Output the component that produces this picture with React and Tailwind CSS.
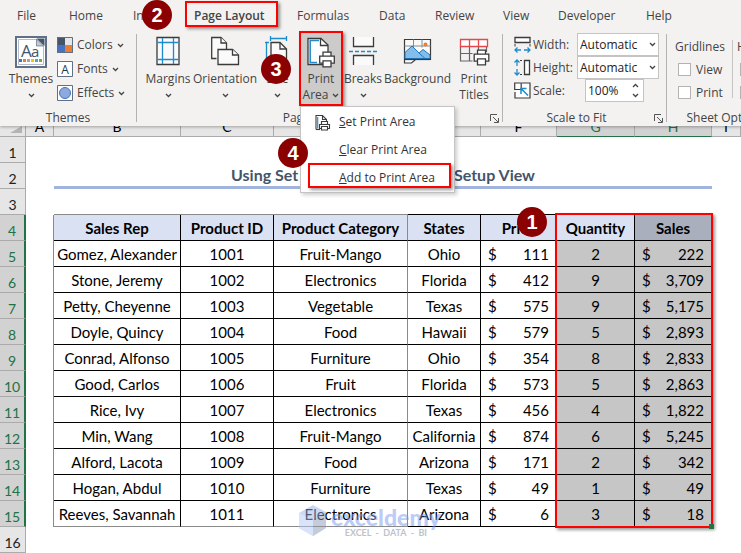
import { useState } from "react";

const TABS = [
  { name: "File", width: "w-[52px]" },
  { name: "Home", width: "w-[64px]" },
  { name: "Insert", width: "w-[61px]" },
  { name: "Page Layout", width: "w-[103px]" },
  { name: "Formulas", width: "w-[82px]" },
  { name: "Data", width: "w-[56px]" },
  { name: "Review", width: "w-[68px]" },
  { name: "View", width: "w-[55px]" },
  { name: "Developer", width: "w-[88px]" },
  { name: "Help", width: "w-[40px]" },
];

const HEADERS = ["Sales Rep", "Product ID", "Product Category", "States", "Price", "Quantity", "Sales"];

const ROWS = [
  ["Gomez, Alexander", "1001", "Fruit-Mango", "Ohio", "111", "2", "222"],
  ["Stone, Jeremy", "1002", "Electronics", "Florida", "412", "9", "3,709"],
  ["Petty, Cheyenne", "1003", "Vegetable", "Texas", "575", "9", "5,175"],
  ["Doyle, Quincy", "1004", "Food", "Hawaii", "579", "5", "2,893"],
  ["Conrad, Alfonso", "1005", "Furniture", "Ohio", "354", "8", "2,833"],
  ["Good, Carlos", "1006", "Fruit", "Florida", "573", "5", "2,863"],
  ["Rice, Ivy", "1007", "Electronics", "Texas", "456", "4", "1,822"],
  ["Min, Wang", "1008", "Fruit-Mango", "California", "874", "6", "5,245"],
  ["Alford, Lacota", "1009", "Food", "Arizona", "171", "2", "342"],
  ["Hogan, Abdul", "1010", "Furniture", "Texas", "49", "1", "49"],
  ["Reeves, Savannah", "1011", "Electronics", "Arizona", "6", "3", "18"],
];

function Chevron({ up = false }) {
  return (
    <svg width="7" height="5" viewBox="0 0 7 5" fill="none" stroke="#444" strokeWidth="1.3" className="shrink-0">
      <path d={up ? "M1 4l2.5-2.5L6 4" : "M1 1l2.5 2.5L6 1"} />
    </svg>
  );
}

function Callout({ n, className }) {
  return (
    <span
      className={`pointer-events-none absolute z-40 flex size-[30px] items-center justify-center rounded-full bg-[#8b0000] font-['Liberation_Sans',sans-serif] text-[20px] leading-none font-bold text-white ${className}`}
    >
      {n}
    </span>
  );
}

function RedBox({ className }) {
  return (
    <span
      className={`pointer-events-none absolute border-2 border-[#ff0000] shadow-[2px_2px_3px_rgba(0,0,0,0.4)] ${className}`}
    />
  );
}

function Printer({ x, y }) {
  return (
    <g transform={`translate(${x} ${y})`} fill="#fff" stroke="#3b3b3b" strokeWidth="1.3">
      <path d="M4 5V.7h8V5" />
      <path d="M.7 4.7h14.6v7H.7z" />
      <path d="M4 9.3h8v6H4z" />
    </g>
  );
}

function ThemesIcon() {
  return (
    <svg width="32" height="32" viewBox="0 0 32 32">
      <rect x="1" y="1" width="30" height="30" fill="#fff" stroke="#5f6f85" strokeWidth="2" />
      <path d="M3.5 28.5v-25H22l6.5 6.5v18.5z" fill="#fff" stroke="#b4bccb" />
      <path d="M21.5 2.5H29.5V10z" fill="#44546a" />
      <path d="M21.5 3v7H28.5z" fill="#c3cad6" stroke="#5f6f85" strokeWidth=".7" />
      <text x="6" y="21" fontSize="17" fill="#44546a" fontFamily="Open Sans, sans-serif">A</text>
      <text x="16" y="21" fontSize="15" fill="#44546a" fontFamily="Open Sans, sans-serif">a</text>
      <path d="M4 23h3v3H4z" fill="#4472c4" />
      <path d="M8 23h3v3H8z" fill="#ed7d31" />
      <path d="M12 23h3v3h-3z" fill="#a5a5a5" />
      <path d="M16 23h3v3h-3z" fill="#ffc000" />
      <path d="M20 23h3v3h-3z" fill="#5b9bd5" />
      <path d="M24 23h3v3h-3z" fill="#70ad47" />
    </svg>
  );
}

function ColorsIcon() {
  return (
    <svg width="16" height="16" viewBox="0 0 16 16">
      <path d="M0 0h8v8H0z" fill="#44546a" />
      <path d="M8 0h8v8H8z" fill="#e7e6e6" />
      <path d="M0 8h8v8H0z" fill="#4472c4" />
      <path d="M8 8h8v8H8z" fill="#ed7d31" />
      <path d="M.5.5h15v15H.5z" fill="none" stroke="#5f6f85" />
    </svg>
  );
}

function FontsIcon() {
  return (
    <svg width="16" height="16" viewBox="0 0 16 16">
      <path d="M.5.5h15v15H.5z" fill="#fff" stroke="#5f6f85" />
      <text x="8" y="12.5" textAnchor="middle" fontSize="12" fill="#26374d" fontFamily="Open Sans, sans-serif">A</text>
    </svg>
  );
}

function EffectsIcon() {
  return (
    <svg width="16" height="16" viewBox="0 0 16 16">
      <path d="M.5.5h15v15H.5z" fill="#fff" stroke="#5f6f85" />
      <circle cx="8" cy="8" r="5.5" fill="#8ea9db" stroke="#4472c4" />
    </svg>
  );
}

function MarginsIcon() {
  return (
    <svg width="24" height="30" viewBox="0 0 24 30" fill="none">
      <path d="M1 1.500h22v27H1z" fill="#fafafa" stroke="#3b3b3b" strokeWidth="1.3" />
      <path d="M6.5 2v26M17.5 2v26M1.500 6.5h21M1.500 23.5h21" stroke="#1e8bcd" strokeWidth="1.3" />
    </svg>
  );
}

function OrientationIcon() {
  return (
    <svg width="30" height="30" viewBox="0 0 30 30" fill="#fafafa" stroke="#3b3b3b" strokeWidth="1.3">
      <path d="M6.500 22.5H1.700V1.500H11l5.500 5.500v6" />
      <path d="M11 1.500V7h5.500" />
      <path d="M8 13.500h14.500l6 5.500v9.500H8z" />
      <path d="M22.500 13.500V19h6" />
    </svg>
  );
}

function SizeIcon() {
  return (
    <svg width="26" height="30" viewBox="0 0 26 30" fill="none">
      <path d="M5.5 2.5h16M5.5 0v5M21.5 0v5M1.5 6v22M0 6.5h4" stroke="#1e8bcd" strokeWidth="1.3" />
      <path d="M6 28.5V6.5h9l6.5 6.5v15.5z" fill="#fafafa" stroke="#3b3b3b" strokeWidth="1.3" />
      <path d="M15 6.5V13h6.5" stroke="#3b3b3b" strokeWidth="1.3" />
    </svg>
  );
}

function PrintAreaIcon({ width = 28, height = 32 }) {
  return (
    <svg width={width} height={height} viewBox="0 0 28 32">
      <path d="M1 28.5V2.5h13l7 6.5v19.5z" fill="#fff" stroke="#3b3b3b" strokeWidth="1.3" />
      <path d="M10 26.5H3.2V4.5H12" fill="none" stroke="#1e8bcd" strokeWidth="1.5" />
      <path d="M13.5 2.5V9.5H21" fill="none" stroke="#3b3b3b" strokeWidth="1.3" />
      <Printer x={12} y={15.5} />
    </svg>
  );
}

function SetPrintAreaIcon() {
  return (
    <svg width="16" height="17" viewBox="0 0 16 17" fill="none" stroke="#3b3b3b" strokeWidth="1.1">
      <path d="M1 15.5V1.500h6.500l4 4v3M7.500 1.500v4h4" />
      <path d="M2.700 14.500V3" stroke="#1e8bcd" />
      <path d="M6.500 10.500v-3h6v3M4.500 10.500h10v4h-10z" fill="#fff" />
      <path d="M6.500 12.500h6v3.500h-6z" fill="#fff" />
      <path d="M1 15.500h4" />
    </svg>
  );
}

function BreaksIcon() {
  return (
    <svg width="30" height="30" viewBox="0 0 30 30" fill="none">
      <path d="M5.5 1v9.5h20V1M5.5 29v-9.5h20V29" fill="#fafafa" stroke="#3b3b3b" strokeWidth="1.3" />
      <path d="M1 15.5h29" stroke="#1e8bcd" strokeWidth="1.3" strokeDasharray="4 2" />
    </svg>
  );
}

function BackgroundIcon() {
  return (
    <svg width="30" height="30" viewBox="0 0 30 30" fill="none">
      <path d="M1.5 3.5h26v20h-15l-4 3.5h-7z" fill="#fafafa" stroke="#3b3b3b" strokeWidth="1.2" />
      <path d="M10.5 3.5v8M19 3.5v8M1.5 10h26" stroke="#8a8a8a" />
      <path d="M2 22.5v-6l7-6.5 7 7 4-3.5 7 5.5v3.5z" fill="#83bdec" stroke="#1e77bd" />
      <path d="M16 17l6 5.5" stroke="#1e77bd" />
      <circle cx="22.5" cy="8.5" r="2" fill="#ed7d31" />
      <path d="M1.5 23.5h26" stroke="#3b3b3b" strokeWidth="1.2" />
    </svg>
  );
}

function PrintTitlesIcon() {
  return (
    <svg width="32" height="30" viewBox="0 0 32 30" fill="none">
      <path d="M2.5 10v15h12M11.5 10v15M2.5 17.5h12M20.5 10v5M28.5 10v6" stroke="#666" strokeWidth="1.2" />
      <path d="M2.5 3.5h27v7h-27zM11.5 3.5v7M20.5 3.5v7" fill="#fff" stroke="#e8474c" strokeWidth="1.3" />
      <Printer x={15.5} y={13.5} />
    </svg>
  );
}

function WidthIcon() {
  return (
    <svg width="17" height="17" viewBox="0 0 17 17" fill="none">
      <path d="M1 1.5h15v5H1z" fill="#fff" stroke="#3b3b3b" strokeWidth="1.3" />
      <path d="M1 8v2.5M16 8v2.5" stroke="#3b3b3b" />
      <path d="M1 14h6M10 14h6M3.5 11.500L1 14l2.500 2.500M13.500 11.500L16 14l-2.500 2.500" stroke="#1e8bcd" strokeWidth="1.3" />
    </svg>
  );
}

function HeightIcon() {
  return (
    <svg width="17" height="17" viewBox="0 0 17 17" fill="none">
      <path d="M10.5 1.5h5v14h-5z" fill="#fff" stroke="#3b3b3b" strokeWidth="1.3" />
      <path d="M6 1.5h3M6 15.5h3" stroke="#3b3b3b" strokeDasharray="2 1" />
      <path d="M3 1v6M3 10v6M.5 3.5L3 1l2.5 2.5M.5 13.5L3 16l2.5-2.5" stroke="#1e8bcd" strokeWidth="1.3" />
    </svg>
  );
}

function ScaleIcon() {
  return (
    <svg width="17" height="17" viewBox="0 0 17 17" fill="none">
      <path d="M8 1H16v15H1v-6" fill="#fff" stroke="#3b3b3b" strokeWidth="1.2" />
      <path d="M.7 1h6.500v6.500H.7z" fill="#fff" stroke="#3b3b3b" strokeWidth="1.2" />
      <path d="M14 13.500L7.500 7M7 12V6.500h5.500" stroke="#1e8bcd" strokeWidth="1.5" />
    </svg>
  );
}

function Launcher({ label }) {
  return (
    <button aria-label={label} className="absolute right-[3px] bottom-[3px]">
      <svg width="9" height="9" viewBox="0 0 9 9" fill="none" stroke="#555">
        <path d="M.5 7V.5H7M3 3l5 5M8.5 4v4.5H4" />
      </svg>
    </button>
  );
}

function Group({ title, className, children, launcher }) {
  return (
    <section className={`relative flex shrink-0 flex-col ${className}`}>
      <div className="flex h-[79px]">{children}</div>
      <div className={`text-center leading-4 ${launcher ? "pr-4" : ""}`}>{title}</div>
      {launcher && <Launcher label={`${title} settings`} />}
    </section>
  );
}

function Divider() {
  return <div className="mt-[3px] h-[88px] w-px shrink-0 bg-[#b5b3b1]" />;
}

function BigButton({ icon, label, second, menu = false, className }) {
  return (
    <button className={`flex shrink-0 flex-col items-center pt-[5px] leading-4 ${className}`}>
      <span className="flex h-[35px] items-start">{icon}</span>
      <span>{label}</span>
      <span className="flex h-4 items-center gap-1">
        {second}
        {menu && <Chevron />}
      </span>
    </button>
  );
}

function SmallButton({ icon, label }) {
  return (
    <button className="flex h-6 items-center gap-1">
      {icon}
      <span>{label}</span>
      <Chevron />
    </button>
  );
}

function FitSelect({ id, icon, label }) {
  return (
    <div className="flex h-[23px] items-center">
      {icon}
      <label htmlFor={id} className="w-[46px] pl-0.5">{label}</label>
      <span className="relative flex items-center">
        <select id={id} className="h-[23px] w-[82px] appearance-none border border-[#c6c4c2] bg-white pl-0.5 text-[#222]">
          <option>Automatic</option>
        </select>
        <span className="pointer-events-none absolute right-[3px]"><Chevron /></span>
      </span>
    </div>
  );
}

function CheckOption({ label }) {
  return (
    <label className="flex h-[23px] items-center gap-[5px]">
      <input type="checkbox" className="size-[13px] shrink-0 appearance-none border border-[#b5b3b1] bg-white" />
      {label}
    </label>
  );
}

function PrintAreaMenu() {
  const item = "flex h-7 w-full items-center text-left";
  return (
    <div role="menu" className="absolute top-[75px] left-px z-30 w-[155px] border border-[#c6c4c2] bg-white pt-px text-[#333] shadow-[2px_2px_4px_rgba(0,0,0,0.2)]">
      <button role="menuitem" className={item}>
        <span className="w-[38px] pl-[14px]"><SetPrintAreaIcon /></span>
        <span><u>S</u>et Print Area</span>
      </button>
      <button role="menuitem" className={`${item} pl-[38px]`}>
        <span><u>C</u>lear Print Area</span>
      </button>
      <button role="menuitem" className={`${item} relative pl-[38px]`}>
        <span><u>A</u>dd to Print Area</span>
        <RedBox className="-top-px left-[7px] h-[25px] w-[143px]" />
      </button>
      <Callout n="4" className="top-[31px] left-[-23px]" />
    </div>
  );
}

function Ribbon() {
  const [scale, setScale] = useState("100%");

  return (
    <header className="relative z-20 h-[126px] bg-[#f3f2f1] text-[12px] text-[#444] shadow-[0_1px_3px_rgba(0,0,0,0.3)]">
      <nav className="flex h-[31px] items-center pl-[17px]">
        {TABS.map((tab) => (
          <button key={tab.name} className={`relative h-[31px] shrink-0 text-left ${tab.width}`}>
            <span className={tab.name === "Page Layout" ? "font-semibold" : ""}>{tab.name}</span>
            {tab.name === "Insert" && <Callout n="2" className="top-0 left-[9px]" />}
            {tab.name === "Page Layout" && <RedBox className="top-[1px] left-[-9px] h-[26px] w-[93px]" />}
          </button>
        ))}
      </nav>

      <div className="flex h-[95px]">
        <Group title="Themes" className="w-[136px]">
          <BigButton icon={<ThemesIcon />} label="Themes" menu className="ml-[5px] w-[52px]" />
          <div className="flex flex-col pt-0.5">
            <SmallButton icon={<ColorsIcon />} label="Colors" />
            <SmallButton icon={<FontsIcon />} label="Fonts" />
            <SmallButton icon={<EffectsIcon />} label="Effects" />
          </div>
        </Group>
        <Divider />

        <Group title="Page Setup" className="w-[365px] pl-[5px]" launcher>
          <BigButton icon={<MarginsIcon />} label="Margins" menu className="w-[52px]" />
          <BigButton icon={<OrientationIcon />} label="Orientation" menu className="w-[62px]" />
          <div className="relative flex">
            <BigButton icon={<SizeIcon />} label="Size" menu className="w-[43px]" />
            <Callout n="3" className="top-[23px] left-[5px]" />
          </div>
          <div className="relative flex h-[75px]">
            <BigButton icon={<PrintAreaIcon />} label="Print" second="Area" menu className="w-[44px] bg-[#cdcbc9]" />
            <RedBox className="inset-0" />
            <PrintAreaMenu />
          </div>
          <BigButton icon={<BreaksIcon />} label="Breaks" menu className="w-[40px]" />
          <BigButton icon={<BackgroundIcon />} label="Background" className="w-[69px]" />
          <BigButton icon={<PrintTitlesIcon />} label="Print" second="Titles" className="w-[44px]" />
        </Group>
        <Divider />

        <Group title="Scale to Fit" className="w-[163px]" launcher>
          <div className="flex flex-col pt-0.5 pl-[11px]">
            <FitSelect id="fit-width" icon={<WidthIcon />} label="Width:" />
            <FitSelect id="fit-height" icon={<HeightIcon />} label="Height:" />
            <div className="flex h-[23px] items-center">
              <ScaleIcon />
              <label htmlFor="fit-scale" className="w-[54px] pl-0.5">Scale:</label>
              <span className="flex h-[23px] w-[59px] items-center border border-[#c6c4c2] bg-white pl-0.5">
                <input
                  id="fit-scale"
                  className="w-[44px] text-[#222] outline-none"
                  value={scale}
                  onChange={(e) => setScale(e.target.value)}
                />
                <span className="flex flex-col gap-[5px]">
                  <button aria-label="Increase scale" className="flex"><Chevron up /></button>
                  <button aria-label="Decrease scale" className="flex"><Chevron /></button>
                </span>
              </span>
            </div>
          </div>
        </Group>
        <Divider />

        <div className="min-w-0 flex-1 overflow-hidden">
          <Group title="Sheet Options" className="w-[118px]">
            <div className="flex w-[65px] shrink-0 flex-col pt-1 pl-2">
              <div className="h-[23px] leading-[23px]">Gridlines</div>
              <div className="pl-[3px]"><CheckOption label="View" /></div>
              <div className="pl-[3px]"><CheckOption label="Print" /></div>
            </div>
            <div className="mt-[9px] h-[58px] w-px shrink-0 bg-[#c6c4c2]" />
            <div className="flex flex-col pt-1 pl-1">
              <div className="h-[23px] leading-[23px]">Headings</div>
              <div className="pl-[3px]"><CheckOption label="View" /></div>
              <div className="pl-[3px]"><CheckOption label="Print" /></div>
            </div>
          </Group>
        </div>
      </div>
    </header>
  );
}

function RowNumber({ n }) {
  const selected = n >= 4 && n <= 15;
  return (
    <th
      scope="row"
      className={`border-b border-[#ababab] p-0 text-center align-bottom text-[14px] leading-[18px] font-normal ${
        selected ? "border-r-2 border-r-[#217346] bg-[#d2d2d2] text-[#217346]" : "border-r border-r-[#ababab] bg-[#e6e6e6] text-[#222]"
      }`}
    >
      {n}
    </th>
  );
}

function Money({ value }) {
  return (
    <span className="flex justify-between px-[7px]">
      <span>$</span>
      <span>{value}</span>
    </span>
  );
}

function Sheet() {
  const letter = "flex h-[10px] items-end justify-center overflow-hidden text-[14px] leading-[18px]";

  return (
    <main className="relative">
      <table className="w-full table-fixed border-separate border-spacing-0 text-[15px] leading-[18px] text-black">
        <colgroup>
          <col className="w-[26px]" />
          <col className="w-[28px]" />
          <col className="w-[127px]" />
          <col className="w-[93px]" />
          <col className="w-[134px]" />
          <col className="w-[73px]" />
          <col className="w-[76px]" />
          <col className="w-[78px]" />
          <col className="w-[77px]" />
          <col />
        </colgroup>
        <thead>
          <tr className="h-[11px] bg-[#e6e6e6]">
            <th className="border-r border-b border-[#ababab] p-0">
              <svg width="12" height="10" viewBox="0 0 12 10" className="ml-[10px]">
                <path d="M12 0v7H0z" fill="#b4b4b4" />
              </svg>
            </th>
            {["A", "B", "C", "D", "E", "F", "G", "H", "I"].map((col) => (
              <th
                key={col}
                scope="col"
                className={`border-r border-b p-0 font-normal ${
                  col === "G" || col === "H"
                    ? "border-r-[#ababab] border-b-[#217346] bg-[#d2d2d2] text-[#217346]"
                    : "border-[#ababab]"
                }`}
              >
                <div className={letter}>{col}</div>
              </th>
            ))}
          </tr>
        </thead>
        <tbody>
          <tr className="h-[26px]"><RowNumber n={1} /><td colSpan={9} /></tr>
          <tr className="h-[26px]">
            <RowNumber n={2} />
            <td />
            <td colSpan={7} className="border-b-3 border-[#a1b4de] p-0 text-center text-[16px] font-bold text-[#44546a]">
              Using Set Print Area from Page Setup View
            </td>
            <td />
          </tr>
          <tr className="h-[26px]">
            <RowNumber n={3} />
            <td className="p-0" />
            <td colSpan={3} className="border-b border-[#8a8a8a] p-0" />
            <td colSpan={4} className="border-b border-black p-0" />
            <td />
          </tr>
          <tr className="h-[26px]">
            <RowNumber n={4} />
            <td className="border-r border-[#8a8a8a] p-0" />
            {HEADERS.map((name) => (
              <th
                key={name}
                scope="col"
                className={`border-r border-b border-b-black p-0 font-bold whitespace-nowrap ${
                  name === "Product Category" ? "border-r-[#8a8a8a]" : "border-r-black"
                } ${name === "Sales" ? "bg-[#a9afbd]" : "bg-[#dae1f3]"}`}
              >
                {name}
              </th>
            ))}
            <td />
          </tr>
          {ROWS.map((row, i) => (
            <tr key={row[1]} className="h-[26px]">
              <RowNumber n={i + 5} />
              <td className="border-r border-[#8a8a8a] p-0" />
              {row.map((value, c) => (
                <td
                  key={HEADERS[c]}
                  className={`border-r border-b p-0 text-center whitespace-nowrap ${c > 4 ? "bg-[#c6c6c6]" : ""} ${
                    c === 2 ? "border-r-[#8a8a8a]" : "border-r-black"
                  } ${i === ROWS.length - 1 && c < 3 ? "border-b-[#8a8a8a]" : "border-b-black"}`}
                >
                  {c === 4 || c === 6 ? <Money value={value} /> : value}
                </td>
              ))}
              <td />
            </tr>
          ))}
          <tr className="h-[26px]"><RowNumber n={16} /><td colSpan={9} /></tr>
        </tbody>
      </table>

      <RedBox className="top-[87px] left-[555px] h-[315px] w-[158px]" />
      <span className="absolute top-[398px] left-[709px] size-[5px] bg-[#217346]" />
      <Callout n="1" className="top-[81px] left-[517px]" />

      <div className="pointer-events-none absolute top-[379px] left-[299px] flex items-center gap-1 opacity-50">
        <svg width="28" height="32" viewBox="0 0 28 32">
          <path d="M14 0l13 7v16l-13 8L0 23V8z" fill="#9bb4ea" />
          <path d="M14 15l13-8v16l-13 8z" fill="#8d99b5" />
          <path d="M0 8l14 7v16L0 23z" fill="#b5c8f5" />
        </svg>
        <div className="flex flex-col items-center">
          <span className="text-[23px] leading-[22px] font-black text-[#7b9bf0]">exceldemy</span>
          <span className="text-[9px] leading-[9px] font-bold whitespace-pre text-[#7c8698]">EXCEL  -  DATA  -  BI</span>
        </div>
      </div>
    </main>
  );
}

export default function App() {
  return (
    <div className="overflow-hidden bg-white">
      <div className="font-['Open_Sans','Noto_Sans',sans-serif]">
        <Ribbon />
      </div>
      <div className="font-['Lato','Open_Sans',sans-serif]">
        <Sheet />
      </div>
    </div>
  );
}
